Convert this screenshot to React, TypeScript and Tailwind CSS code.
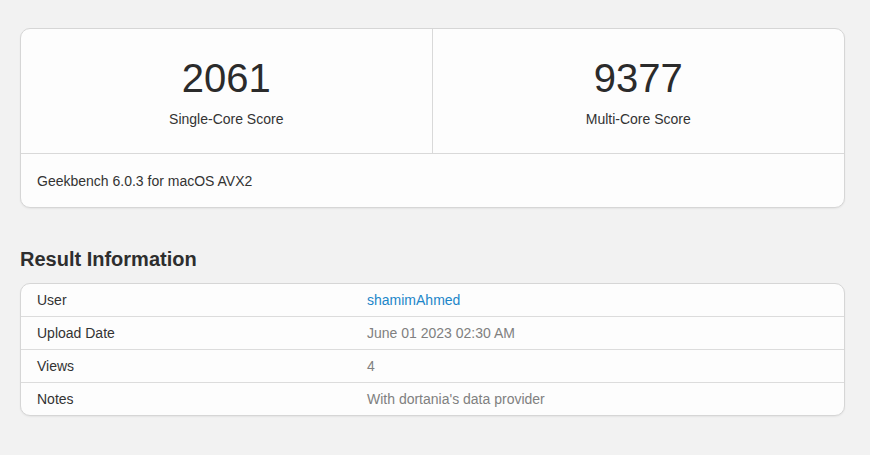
import React from 'react';

const ROWS = [
  { label: 'User', value: 'shamimAhmed', link: true },
  { label: 'Upload Date', value: 'June 01 2023 02:30 AM' },
  { label: 'Views', value: '4' },
  { label: 'Notes', value: "With dortania's data provider" },
];

export default function App() {
  return (
    <div
      className="min-h-[455px] bg-[#f2f2f2] pl-5 pr-[25px] pt-7 text-[#333]"
      style={{ fontFamily: '"Liberation Sans", Arial, sans-serif' }}
    >
      {/* scores */}
      <div className="rounded-[10px] border border-[#d6d6d6] bg-[#fdfdfd] shadow-[0_1px_2px_rgba(0,0,0,0.06)]">
        <div className="grid grid-cols-2 border-b border-[#d9d9d9]">
          <div className="border-r border-[#d9d9d9] pt-[29px] pb-[24px] text-center">
            <div className="text-[40px] leading-none text-[#2b2b2b]">2061</div>
            <div className="mt-[11px] text-sm leading-5 text-[#333]">Single-Core Score</div>
          </div>
          <div className="pt-[29px] pb-[24px] text-center">
            <div className="text-[40px] leading-none text-[#2b2b2b]">9377</div>
            <div className="mt-[11px] text-sm leading-5 text-[#333]">Multi-Core Score</div>
          </div>
        </div>
        <div className="px-4 pt-[17px] pb-4 text-sm leading-5 text-[#333]">Geekbench 6.0.3 for macOS AVX2</div>
      </div>

      <h2 className="mt-[37px] mb-[10px] text-xl leading-7 font-bold text-[#2e2e2e]">Result Information</h2>

      <div className="rounded-[10px] border border-[#d6d6d6] bg-[#fdfdfd] shadow-[0_1px_2px_rgba(0,0,0,0.06)]">
        {ROWS.map((row, i) => (
          <div
            key={row.label}
            className={`grid grid-cols-[346px_1fr] py-[6px] text-sm leading-5 ${i < ROWS.length - 1 ? 'border-b border-[#dcdcdc]' : ''}`}
          >
            <div className="pl-4 text-[#333]">{row.label}</div>
            <div className={row.link ? 'text-[#1c86c9]' : 'text-[#808080]'}>{row.value}</div>
          </div>
        ))}
      </div>
    </div>
  );
}
